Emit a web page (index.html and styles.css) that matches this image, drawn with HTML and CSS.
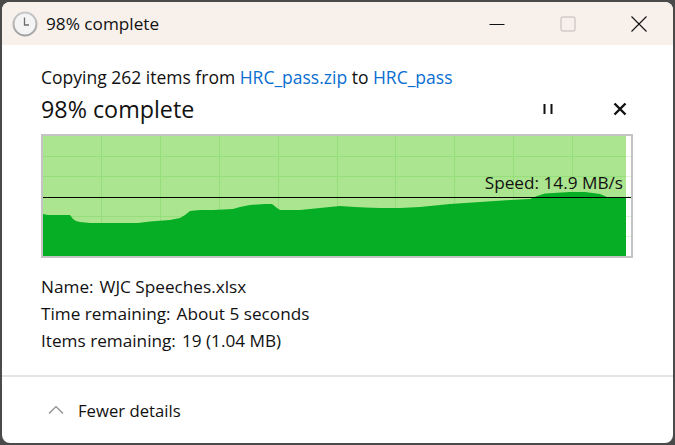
FILE: index.html
```html
<!DOCTYPE html>
<html>
<head>
    <meta charset="utf-8" />
    <title>98% complete</title>
    <link rel="stylesheet" href="styles.css">
</head>
<body>
    <div class="window">
        <div class="titlebar">
            <svg class="clock" width="26" height="26" viewBox="0 0 26 26">
                <defs>
                    <linearGradient id="ring" x1="0" y1="0" x2="0" y2="1">
                        <stop offset="0" stop-color="#c9c9c9" />
                        <stop offset="1" stop-color="#a2a2a2" />
                    </linearGradient>
                </defs>
                <circle cx="13" cy="13" r="11.5" fill="#f4f4f4" stroke="url(#ring)" stroke-width="2" />
                <path d="M12.5 6.5V14H17" fill="none" stroke="#6e6e6e" stroke-width="1.3" />
            </svg>
            <span class="title">98% complete</span>
            <div class="winbuttons">
                <svg width="16" height="16" viewBox="0 0 16 16"><path d="M0.5 8.5H15.5" stroke="#111" stroke-width="1" /></svg>
                <svg width="16" height="16" viewBox="0 0 16 16"><rect x="1" y="1" width="14" height="14" rx="2" fill="none" stroke="#cfcbc8" stroke-width="1.4" /></svg>
                <svg width="16" height="16" viewBox="0 0 16 16"><path d="M0.5 0.5L15.5 15.5M15.5 0.5L0.5 15.5" stroke="#111" stroke-width="1.1" /></svg>
            </div>
        </div>
        <div class="content">
            <p class="copying">Copying 262 items from <a>HRC_pass.zip</a> to <a>HRC_pass</a></p>
            <div class="status">
                <span class="percent">98% complete</span>
                <div class="controls">
                    <svg width="12" height="12" viewBox="0 0 12 12"><path d="M2.5 1V11M9.5 1V11" stroke="#111" stroke-width="2" /></svg>
                    <svg width="14" height="14" viewBox="0 0 14 14"><path d="M1.5 1.5L12.5 12.5M12.5 1.5L1.5 12.5" stroke="#111" stroke-width="2.4" /></svg>
                </div>
            </div>
            <div class="chart">
                <svg width="588" height="120" viewBox="43 137 588 120">
                    <rect x="43" y="137" width="583" height="120" fill="#abe58f" />
                    <path class="grid-light" d="M626 157.5H631M626 177.5H631M626 197.5H631M626 217.5H631M626 237.5H631" />
                    <path class="grid" d="M101.5 137V257M160.5 137V257M219.5 137V257M278.5 137V257M337.5 137V257M395.5 137V257M454.5 137V257M513.5 137V257M572.5 137V257" />
                    <path class="grid" d="M43 157.5H626M43 177.5H626M43 217.5H626M43 237.5H626" />
                    <path d="M43 215L48 216L70 216L73 220L76 222L80 223L90 224L138 224L150 222.5L170 221L180 219L185 216L190 212L200 211L213 211L233 210L240 208L250 206L265 205L272 205L277 209L280 211L300 211L310 210L330 208L340 207L355 208L365 208.5L380 209L400 209L420 208L450 205L480 203L510 201L530 200L537 197L545 194.5L570 193L585 193L600 195L607 198L626 198V257H43Z" fill="#06ae25" />
                    <path d="M43 198.5H631" stroke="#000" stroke-width="1" />
                </svg>
                <span class="speed">Speed: 14.9 MB/s</span>
            </div>
            <div class="details">
                <div class="row"><span>Name:</span><span>WJC Speeches.xlsx</span></div>
                <div class="row"><span>Time remaining:</span><span>About 5 seconds</span></div>
                <div class="row"><span>Items remaining:</span><span>19 (1.04 MB)</span></div>
            </div>
        </div>
        <div class="footer">
            <svg width="16" height="10" viewBox="0 0 16 10"><path d="M1 8.5L8 1.5L15 8.5" fill="none" stroke="#8a8a8a" stroke-width="1.2" /></svg>
            <span>Fewer details</span>
        </div>
    </div>
</body>
</html>
```

FILE: styles.css
```css
html, body {
    height: 100%;
    margin: 0;
    font-size: 17px;
    font-family: "Open Sans", "Noto Sans", Arial, sans-serif;
    background-color: #4a4a4a;
    color: #111;
    overflow: hidden;
}

body {
    padding: 2px;
    box-sizing: border-box;
}

.window {
    height: 441px;
    width: 671px;
    display: flex;
    flex-direction: column;
    background-color: white;
    border-radius: 8px;
    overflow: hidden;
}

.titlebar {
    height: 43px;
    flex-shrink: 0;
    display: flex;
    align-items: center;
    background-color: #f7f0eb;
    padding-left: 10px;
}

.clock {
    margin-right: 8px;
}

.title {
    flex-grow: 1;
    font-size: 17.2px;
}

.winbuttons {
    display: flex;
    gap: 55px;
    padding-right: 26px;
    align-items: center;
}

.content {
    flex-grow: 1;
    padding: 21px 39px 0 39px;
}

.copying {
    margin: 0;
    font-size: 17.5px;
    line-height: 22px;
}

.copying a {
    color: #0a6ed1;
}

.status {
    display: flex;
    align-items: center;
    justify-content: space-between;
    height: 30px;
    margin-top: 6px;
}

.percent {
    font-size: 23.3px;
}

.controls {
    display: flex;
    align-items: center;
    gap: 59px;
    padding-right: 7px;
}

.chart {
    position: relative;
    width: 588px;
    height: 120px;
    margin-top: 10px;
    border: 2px solid #c4c4c4;
    background-color: white;
}

.chart svg {
    display: block;
}

.grid {
    fill: none;
    stroke: #96de7c;
    stroke-width: 1;
}

.grid-light {
    fill: none;
    stroke: #dff5d6;
    stroke-width: 1;
}

.speed {
    position: absolute;
    right: 8px;
    top: 37px;
    font-size: 17.2px;
    line-height: 20px;
}

.details {
    margin-top: 15px;
}

.row {
    display: flex;
    gap: 6px;
    height: 27px;
    font-size: 17.2px;
    line-height: 27px;
}

.footer {
    height: 68px;
    flex-shrink: 0;
    display: flex;
    align-items: center;
    gap: 14px;
    padding-left: 46px;
    font-size: 16.7px;
    border-top: 2px solid #e4e4e4;
    box-sizing: border-box;
}
```
